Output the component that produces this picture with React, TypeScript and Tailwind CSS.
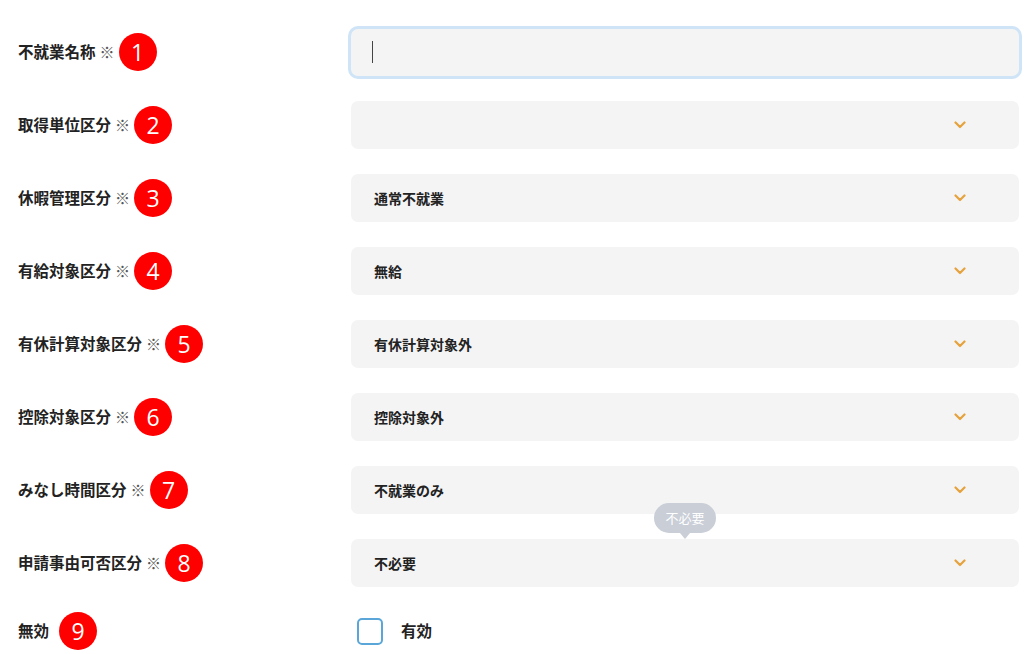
import React from 'react'

const FONT = { fontFamily: '"Noto Sans CJK JP", "Noto Sans", sans-serif' }

interface Row {
  label: string
  required: boolean
  num: number
  value?: string
}

const rows: Row[] = [
  { label: '取得単位区分', required: true, num: 2, value: '' },
  { label: '休暇管理区分', required: true, num: 3, value: '通常不就業' },
  { label: '有給対象区分', required: true, num: 4, value: '無給' },
  { label: '有休計算対象区分', required: true, num: 5, value: '有休計算対象外' },
  { label: '控除対象区分', required: true, num: 6, value: '控除対象外' },
  { label: 'みなし時間区分', required: true, num: 7, value: '不就業のみ' },
  { label: '申請事由可否区分', required: true, num: 8, value: '不必要' },
]

function Badge({ n }: { n: number }) {
  return (
    <span
      className="ml-[4px] inline-flex h-[38px] w-[38px] shrink-0 items-center justify-center rounded-full bg-[#ff0000] text-[23px] leading-none text-white"
      style={{ fontFamily: '"Open Sans", sans-serif' }}
    >
      {n}
    </span>
  )
}

function Label({ text, required, n }: { text: string; required: boolean; n: number }) {
  return (
    <div className="flex w-[351px] shrink-0 items-center pl-[18px]">
      <span className="text-[15.5px] font-bold text-[#222]">{text}</span>
      {required && <span className="ml-[4px] text-[15px] font-bold text-[#555]">※</span>}
      <Badge n={n} />
    </div>
  )
}

function Chevron() {
  return (
    <svg width="12" height="8" viewBox="0 0 12 8" fill="none">
      <polyline points="1.5,1.5 6,6 10.5,1.5" stroke="#e6a23c" strokeWidth="2.2" strokeLinecap="round" strokeLinejoin="round" />
    </svg>
  )
}

export default function App() {
  return (
    <div className="min-h-[654px] w-[1024px] bg-white" style={FONT}>
      <div className="flex flex-col gap-[25px] pt-[28px]">
        <div className="flex h-[48px] items-center">
          <Label text="不就業名称" required n={1} />
          <div className="flex h-[47px] w-[668px] items-center rounded-[7px] bg-[#f4f4f4] pl-[21px] ring-[3px] ring-[#cfe4f7]">
            <span className="h-[22px] w-px bg-[#444]" />
          </div>
        </div>

        {rows.map((r) => (
          <div key={r.num} className="flex h-[48px] items-center">
            <Label text={r.label} required={r.required} n={r.num} />
            <div className="relative flex h-[48px] w-[668px] items-center justify-between rounded-[7px] bg-[#f4f4f4] pl-[23px] pr-[53px]">
              <span className="text-[14px] font-bold text-[#222]">{r.value}</span>
              <Chevron />
              {r.num === 8 && (
                <div className="absolute left-[303px] top-[-36px] flex flex-col items-center">
                  <div className="flex h-[30px] w-[62px] items-center justify-center rounded-full bg-[#c9ced7] text-[13px] text-white">
                    不必要
                  </div>
                  <div className="h-0 w-0 border-x-[5px] border-t-[6px] border-x-transparent border-t-[#c9ced7]" />
                </div>
              )}
            </div>
          </div>
        ))}

        <div className="flex h-[38px] items-center">
          <div className="flex w-[351px] shrink-0 items-center pl-[18px]">
            <span className="text-[15.5px] font-bold text-[#222]">無効</span>
            <span className="ml-[6px]">
              <Badge n={9} />
            </span>
          </div>
          <label className="ml-[6px] flex items-center gap-[18px]">
            <span className="h-[27px] w-[26px] rounded-[5px] border-2 border-[#5aa6d8] bg-white" />
            <span className="text-[15.5px] font-bold text-[#222]">有効</span>
          </label>
        </div>
      </div>
    </div>
  )
}
